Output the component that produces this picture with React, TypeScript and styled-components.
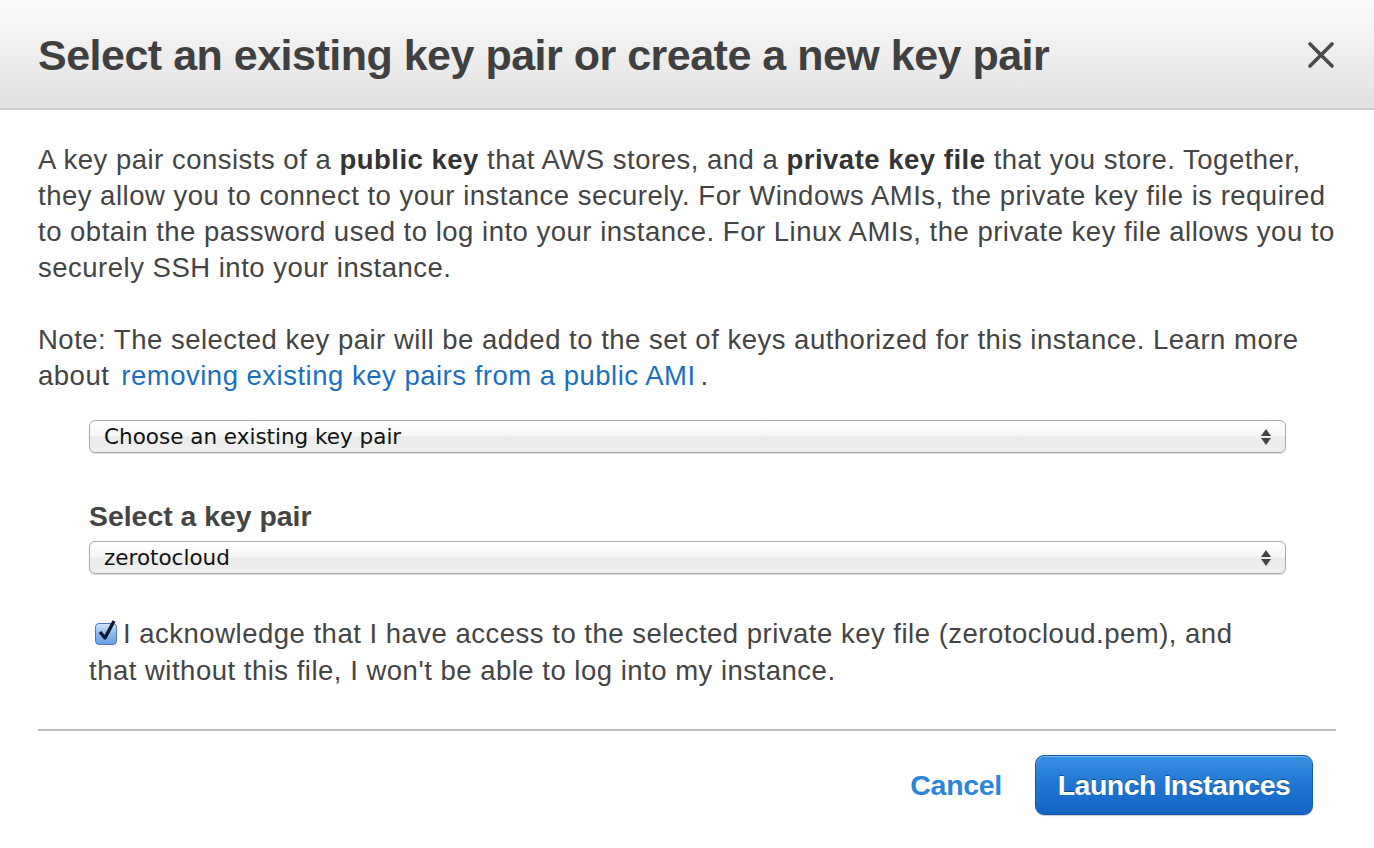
import React from "react";
import styled, { createGlobalStyle } from "styled-components";

const Global = createGlobalStyle`
  html, body { margin: 0; padding: 0; background: #fff; }
  body { font-family: "Liberation Sans", Arial, sans-serif; color: #444; }
`;

const Dialog = styled.div`
  width: 1374px;
  height: 848px;
  background: #fff;
  display: flex;
  flex-direction: column;
`;

const Header = styled.div`
  height: 110px;
  box-sizing: border-box;
  padding: 2px 38px 0 38px;
  display: flex;
  align-items: center;
  justify-content: space-between;
  background: linear-gradient(to bottom, #fbfbfb 0%, #e1e1e1 100%);
  border-bottom: 2px solid #cbcbcb;
`;

const Title = styled.h1`
  margin: 0;
  font-family: "Liberation Sans", Arial, sans-serif;
  font-weight: bold;
  font-size: 43px;
  letter-spacing: -0.5px;
  color: #404040;
`;

const Close = styled.button`
  border: none;
  background: none;
  padding: 0;
  width: 30px;
  height: 30px;
  display: flex;
  align-items: center;
  justify-content: center;
  cursor: pointer;
`;

const Body = styled.div`
  padding: 32px 38px 0 38px;
  display: flex;
  flex-direction: column;
`;

const Para = styled.p<{ $gap?: number }>`
  margin: 0 0 ${(p) => p.$gap ?? 0}px 0;
  font-size: 27.5px;
  letter-spacing: 0.5px;
  line-height: 36px;
  color: #444;
  white-space: nowrap;
  b { color: #333; }
`;

const Link = styled.a`
  color: #1a6fc0;
  text-decoration: none;
  margin-left: 12px;
  margin-right: 5px;
`;

const Form = styled.div`
  padding: 0 50px 0 51px;
  display: flex;
  flex-direction: column;
`;

const SelectBox = styled.div<{ $top: number }>`
  margin-top: ${(p) => p.$top}px;
  height: 33px;
  box-sizing: border-box;
  border: 1px solid #a9a9a9;
  border-radius: 6px;
  background: linear-gradient(to bottom, #ffffff 0%, #f6f6f6 48%, #ebebeb 52%, #efefef 100%);
  box-shadow: 0 1px 1px rgba(0, 0, 0, 0.15);
  display: flex;
  align-items: center;
  justify-content: space-between;
  padding: 0 14px 0 14px;
  font-family: "DejaVu Sans", Verdana, sans-serif;
  font-size: 21.5px;
  color: #111;
`;

const Arrows = styled.span`
  display: flex;
  flex-direction: column;
  gap: 2px;
`;

const Label = styled.div`
  margin-top: 48px;
  font-weight: bold;
  font-size: 28.4px;
  line-height: 30px;
  color: #444;
`;

const AckRow = styled.div`
  margin-top: 41px;
  font-size: 27.5px;
  letter-spacing: 0.5px;
  line-height: 37px;
  color: #444;
  white-space: nowrap;
`;

const Check = styled.span`
  display: inline-flex;
  vertical-align: -2px;
  width: 22px;
  height: 22px;
  box-sizing: border-box;
  margin: 0 6px 0 6px;
  border: 1px solid #4b7ab8;
  border-radius: 4px;
  background: linear-gradient(to bottom, #d4e6fb 0%, #8ab6ef 50%, #6aa0e8 100%);
  position: relative;
  overflow: visible;
  svg { position: absolute; left: 1px; top: -5px; }
`;

const Divider = styled.hr`
  margin: 40px 0 0 0;
  border: none;
  border-top: 2px solid #bdbdbd;
`;

const Footer = styled.div`
  display: flex;
  justify-content: flex-end;
  align-items: center;
  gap: 33px;
  padding: 24px 23px 0 0;
`;

const Cancel = styled.a`
  font-weight: bold;
  font-size: 28.5px;
  color: #2b86d9;
  letter-spacing: -0.3px;
  text-decoration: none;
`;

const Launch = styled.button`
  width: 278px;
  height: 60px;
  box-sizing: border-box;
  border: 1px solid #1358ad;
  border-radius: 9px;
  background: linear-gradient(to bottom, #3a91e3 0%, #1f75d1 50%, #1565c3 100%);
  box-shadow: inset 0 1px 0 rgba(255, 255, 255, 0.35), 0 1px 1px rgba(0, 0, 0, 0.2);
  color: #fff;
  font-family: "Liberation Sans", Arial, sans-serif;
  font-weight: bold;
  font-size: 28.5px;
  letter-spacing: -0.5px;
  text-shadow: 0 -1px 0 rgba(0, 0, 0, 0.35);
  cursor: pointer;
`;

const ArrowsIcon = () => (
  <Arrows>
    <svg width="10" height="7" viewBox="0 0 10 7"><path d="M5 0 L10 7 L0 7 Z" fill="#444" /></svg>
    <svg width="10" height="7" viewBox="0 0 10 7"><path d="M0 0 L10 0 L5 7 Z" fill="#444" /></svg>
  </Arrows>
);

export default function App() {
  return (
    <>
      <Global />
      <Dialog>
        <Header>
          <Title>Select an existing key pair or create a new key pair</Title>
          <Close aria-label="Close">
            <svg width="28" height="28" viewBox="0 0 28 28">
              <path d="M3 3 L25 25 M25 3 L3 25" stroke="#4a4a4a" strokeWidth="3.6" strokeLinecap="round" />
            </svg>
          </Close>
        </Header>
        <Body>
          <Para $gap={36}>
            A key pair consists of a <b>public key</b> that AWS stores, and a <b>private key file</b> that you store. Together,
            <br />
            they allow you to connect to your instance securely. For Windows AMIs, the private key file is required
            <br />
            to obtain the password used to log into your instance. For Linux AMIs, the private key file allows you to
            <br />
            securely SSH into your instance.
          </Para>
          <Para>
            Note: The selected key pair will be added to the set of keys authorized for this instance. Learn more
            <br />
            about<Link href="#">removing existing key pairs from a public AMI</Link>.
          </Para>
          <Form>
            <SelectBox $top={26}>
              <span>Choose an existing key pair</span>
              <ArrowsIcon />
            </SelectBox>
            <Label>Select a key pair</Label>
            <SelectBox $top={10}>
              <span>zerotocloud</span>
              <ArrowsIcon />
            </SelectBox>
            <AckRow>
              <Check>
                <svg width="20" height="24" viewBox="0 0 20 24">
                  <path d="M3 13 L8 19 L17 2" stroke="#0d1a33" strokeWidth="3.4" fill="none" strokeLinejoin="round" />
                </svg>
              </Check>
              I acknowledge that I have access to the selected private key file (zerotocloud.pem), and
              <br />
              that without this file, I won't be able to log into my instance.
            </AckRow>
          </Form>
          <Divider />
          <Footer>
            <Cancel href="#">Cancel</Cancel>
            <Launch>Launch Instances</Launch>
          </Footer>
        </Body>
      </Dialog>
    </>
  );
}
